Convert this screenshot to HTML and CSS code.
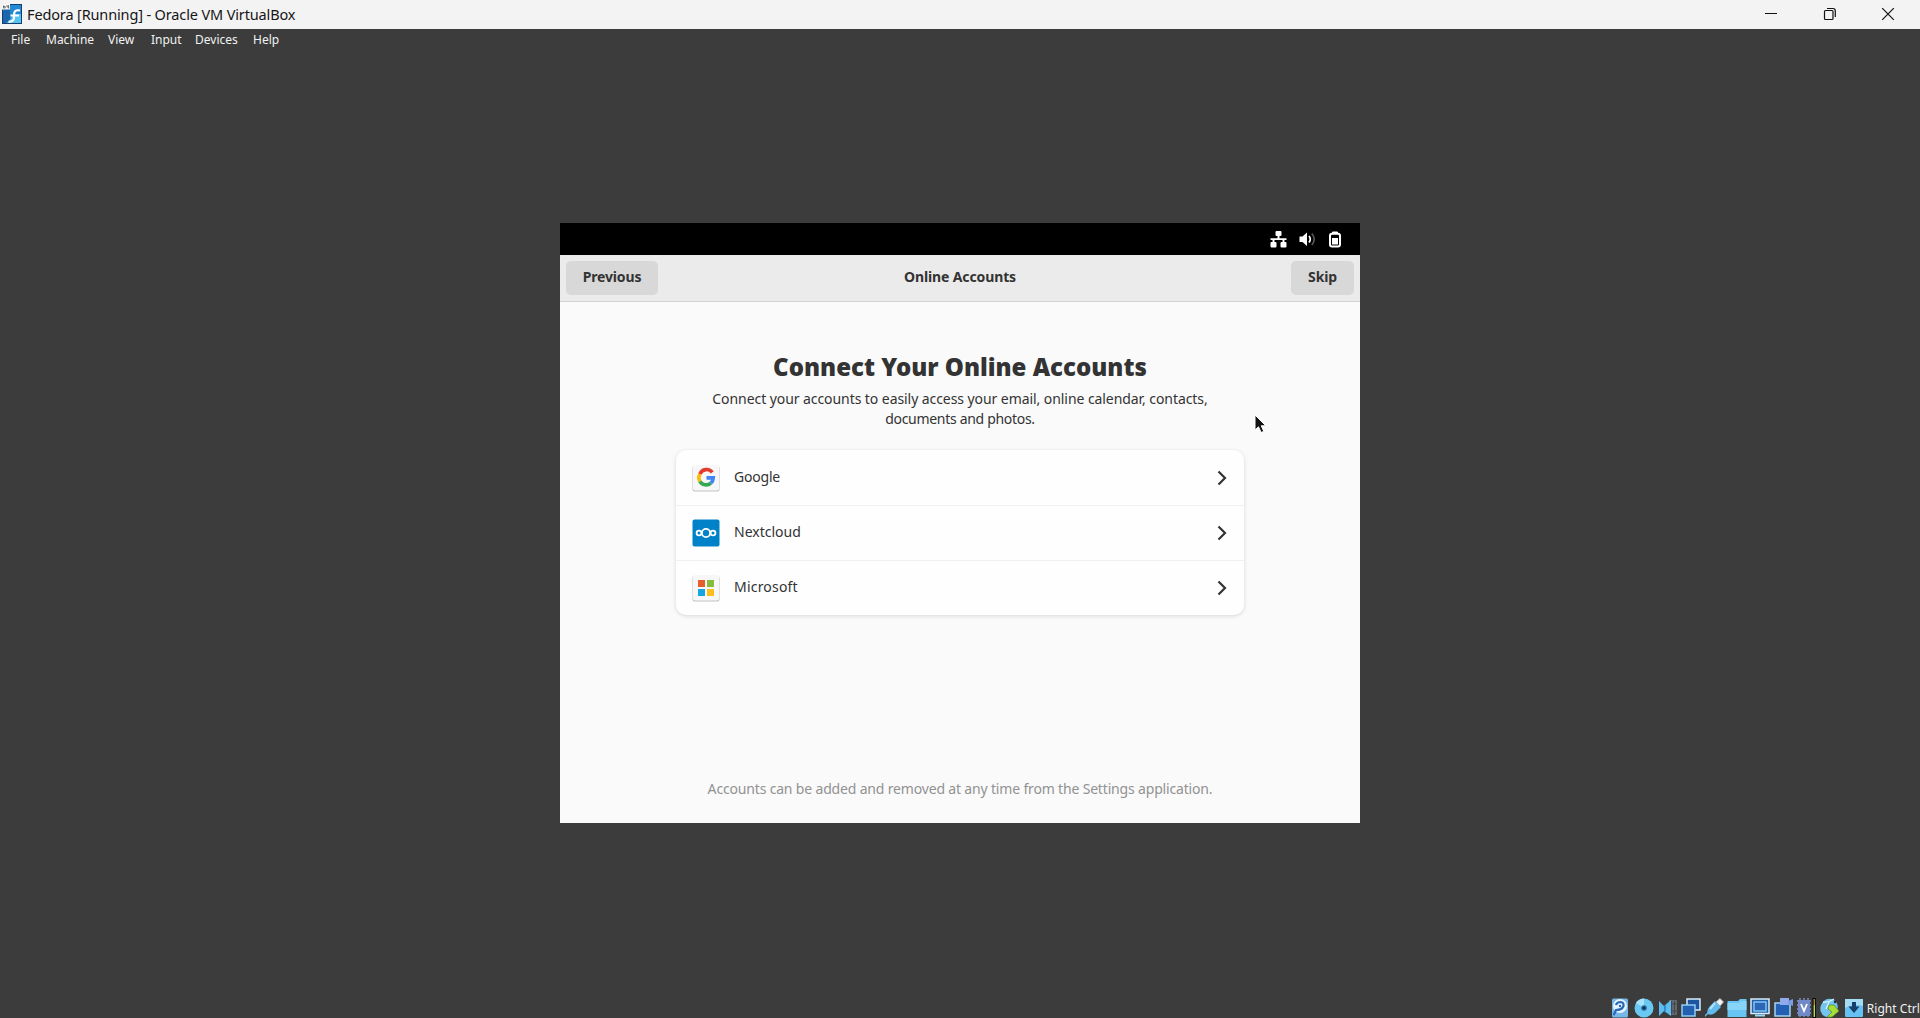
FILE: index.html
```html
<!DOCTYPE html>
<html lang="en">
<head>
<meta charset="utf-8">
<title>Fedora [Running] - Oracle VM VirtualBox</title>
<link rel="stylesheet" href="styles.css">
</head>
<body>
<header class="titlebar">
  <svg class="app-icon" width="20" height="20" viewBox="0 0 20 20">
    <rect x="0" y="0" width="20" height="20" fill="#15406d"/>
    <rect x="1" y="1" width="18" height="18" fill="#2489d4"/>
    <path d="M1 7L8 2V19H1z" fill="#1c67ac"/>
    <path d="M19 10V19H4Q9 17 11 10z" fill="#56c3f5"/>
    <path d="M18 6.5C13 5.5 12 8 12 11V14C12 17 9 18 6.5 17.5M8.5 11.5H17" fill="none" stroke="#fff" stroke-width="2.2"/>
    <rect x="0" y="0" width="8" height="5.5" fill="#f5f7f8"/>
    <path d="M1.5 1.5V4H3.2V2.5H1.5M5 1V3H7M6.6 1V4.5" fill="none" stroke="#555" stroke-width=".8"/>
  </svg>
  <h1 class="window-title">Fedora [Running] - Oracle VM VirtualBox</h1>
  <div class="window-controls">
    <svg width="14" height="14" viewBox="0 0 14 14"><path d="M1 6.500H13" stroke="#111" stroke-width="1"/></svg>
    <svg width="14" height="14" viewBox="0 0 14 14" fill="none" stroke="#111" stroke-width="1.200"><rect x="1.500" y="3.500" width="8.500" height="9" rx="1"/><path d="M4 1.500H10Q12.300 1.500 12.300 4V10"/></svg>
    <svg width="14" height="14" viewBox="0 0 14 14"><path d="M1.200 1.200L12.800 12.800M12.800 1.200L1.200 12.800" stroke="#111" stroke-width="1.200"/></svg>
  </div>
</header>
<nav class="menubar">
  <span class="m-file">File</span><span class="m-machine">Machine</span><span class="m-view">View</span><span class="m-input">Input</span><span class="m-devices">Devices</span><span class="m-help">Help</span>
</nav>
<main class="viewport">
  <section class="guest">
    <div class="topbar">
      <svg width="17" height="17" viewBox="0 0 17 17" fill="#fff"><rect x="5.500" y="0" width="6" height="5" rx="1"/><rect x="0.500" y="11" width="6" height="5.500" rx="1"/><rect x="10.500" y="11" width="6" height="5.500" rx="1"/><path d="M7.500 4h2v3.200h7v1.800h-2v3h-2v-3h-8v3h-2v-3h-2v-1.800h7z"/></svg>
      <svg width="17" height="17" viewBox="0 0 17 17"><path d="M0.500 5.500H3.500L8 1.500V15L3.500 11H0.500z" fill="#fff"/><path d="M10 5Q12.500 8.200 10 11.500" fill="none" stroke="#fff" stroke-width="1.700"/><path d="M12.800 2.500Q17.600 8.200 12.800 14" fill="none" stroke="#555" stroke-width="1.700"/></svg>
      <svg width="14" height="17" viewBox="0 0 14 17"><path d="M4.500 3V1H9.500V3" fill="#fff" stroke="#fff"/><rect x="2" y="2.800" width="10" height="12.700" rx="2" fill="none" stroke="#fff" stroke-width="2"/><rect x="4" y="7" width="6" height="6.500" fill="#fff"/></svg>
    </div>
    <div class="headerbar">
      <button class="btn btn-previous">Previous</button>
      <span class="page-name">Online Accounts</span>
      <button class="btn btn-skip">Skip</button>
    </div>
    <div class="page">
      <h2 class="heading">Connect Your Online Accounts</h2>
      <p class="lead"><span class="lead-first">Connect your accounts to easily access your email, online calendar, contacts,</span><br><span class="lead-second">documents and photos.</span></p>
      <ul class="accounts">
        <li class="account">
          <svg width="28" height="28" viewBox="0 0 28 28"><rect x=".5" y="2" width="27" height="25.500" rx="2" fill="#c2c2c2"/><rect x="1" y="1" width="26" height="25.500" rx="2" fill="#f7f7f7"/>
            <g fill="none" stroke-width="3.600"><path d="M20.300 8.400A7.200 7.200 0 0 0 7.900 10.100" stroke="#e33b2e"/><path d="M7.900 10.100A7.200 7.200 0 0 0 7.900 17.300" stroke="#fbbc05"/><path d="M7.900 17.300A7.200 7.200 0 0 0 18.800 19.100" stroke="#34a853"/><path d="M18.800 19.100A7.200 7.200 0 0 0 21.300 13.900H14.500" stroke="#4285f4"/></g></svg>
          <span class="name n-google">Google</span>
          <svg class="chevron" width="10" height="16" viewBox="0 0 10 16"><path d="M1.500 1.500L8 8L1.500 14.500"/></svg>
        </li>
        <li class="account">
          <svg width="28" height="28" viewBox="0 0 28 28"><rect x=".5" y=".5" width="27" height="27" rx="2" fill="#0082c9"/><g fill="none" stroke="#fff" stroke-width="1.800"><circle cx="14" cy="14" r="4.100"/><circle cx="7" cy="14" r="2.400"/><circle cx="21" cy="14" r="2.400"/></g></svg>
          <span class="name n-nextcloud">Nextcloud</span>
          <svg class="chevron" width="10" height="16" viewBox="0 0 10 16"><path d="M1.500 1.500L8 8L1.500 14.500"/></svg>
        </li>
        <li class="account">
          <svg width="28" height="28" viewBox="0 0 28 28"><rect x=".5" y="2" width="27" height="25.500" rx="2" fill="#c2c2c2"/><rect x="1" y="1" width="26" height="25.500" rx="2" fill="#f7f7f7"/><path d="M6 6h7v7H6z" fill="#e35f2b"/><path d="M15 6h7v7h-7z" fill="#86bc3b"/><path d="M6 15h7v7H6z" fill="#16a5e0"/><path d="M15 15h7v7h-7z" fill="#fdbf1b"/></svg>
          <span class="name n-microsoft">Microsoft</span>
          <svg class="chevron" width="10" height="16" viewBox="0 0 10 16"><path d="M1.500 1.500L8 8L1.500 14.500"/></svg>
        </li>
      </ul>
      <p class="note">Accounts can be added and removed at any time from the Settings application.</p>
    </div>
    <svg class="cursor" width="14" height="21" viewBox="0 0 14 21"><path d="M1 1V16L4.500 12.800L7.200 18.500L9.800 17.300L7.200 11.800H11.800z" fill="#111" stroke="#fff" stroke-width="1"/></svg>
  </section>
</main>
<footer class="statusbar">
  <svg width="20" height="20" viewBox="0 0 20 20"><rect x="2" y="0.500" width="16" height="19" rx="1.500" fill="#77b7e8"/><circle cx="10" cy="8" r="7" fill="#e4f3fd"/><path d="M6 7Q7 4 10.500 4Q14 4.500 13.500 8Q12 12 6 12Q5 15 3.500 17" stroke="#2868b5" stroke-width="2.200" fill="none"/><circle cx="10" cy="8" r="1.200" fill="#2868b5"/></svg>
  <svg class="disc" width="20" height="20" viewBox="0 0 20 20"><circle cx="10" cy="10" r="9.500" fill="#69c9f2"/><path d="M10 10L2 5A9.500 9.500 0 0 1 10 .5z" fill="#a7e2fa"/><circle cx="10" cy="10" r="2.800" fill="#24659f"/><circle cx="10" cy="10" r="1.300" fill="#172a3c"/></svg>
  <svg width="20" height="20" viewBox="0 0 20 20"><path d="M11 2h8v15h-8z" fill="#62686c"/><path d="M13.500 3v13M16.500 3v13M12 6h8M12 13h8" stroke="#43494c"/><path d="M1 3L6 8L13 2V18L6 13L1 18z" fill="#5ebcf0"/><path d="M7 7.500v6" stroke="#217fc0" stroke-width="1.500"/></svg>
  <svg width="20" height="20" viewBox="0 0 20 20"><rect x="6" y="1" width="13" height="11" fill="#1d55a2" stroke="#d8edf9" stroke-width="1.500"/><rect x="1" y="7" width="13" height="11" fill="#2460b0" stroke="#8fcdf4" stroke-width="1.500"/></svg>
  <svg width="20" height="20" viewBox="0 0 20 20"><path d="M12 4L16 .5L19.500 4L16 8z" fill="#f4f4f4" stroke="#aaa"/><path d="M11 3L17 9L11 15Q7 18 4 16L1 19L1 17L3 15Q3 11 6 8z" fill="#62bbec"/><path d="M11 5L6 11" stroke="#afe3fa" stroke-width="2"/></svg>
  <svg width="20" height="20" viewBox="0 0 20 20"><path d="M.5 3H11L13 1H19.500V19H.5z" fill="#67c4f3"/><path d="M.5 5H12L14 3H19.500V12H.5z" fill="#87d5f7"/></svg>
  <svg width="20" height="20" viewBox="0 0 20 20"><rect x="1" y="1" width="18" height="14.500" fill="#245fad" stroke="#d5ecf9" stroke-width="1.500"/><rect x="4" y="4" width="12" height="9" fill="#2c66b6" stroke="#8fd1fa" stroke-width="1.300"/><path d="M5 17.500h10" stroke="#9dd8fa" stroke-width="2"/></svg>
  <svg width="20" height="20" viewBox="0 0 20 20"><rect x="2" y="5" width="15" height="13" fill="#2360b4" stroke="#a4d4f3" stroke-width="1.500"/><rect x="7" y="0" width="9" height="7" fill="#91a9ed"/><path d="M15 3L20 1V8L15 6z" fill="#7d9ae5"/></svg>
  <svg width="20" height="20" viewBox="0 0 20 20"><path d="M1 3H15M1 7H15M1 11H15M1 15H15M4 0V19M8 0V19M12 0V19" stroke="#8298d3" stroke-width="1.300"/><rect x="2" y="2" width="12" height="16" fill="#7289c8"/><path d="M5 6L8 13L11 6" stroke="#fff" stroke-width="1.800" fill="none"/><rect x="16.500" y="0" width="4" height="20" fill="#080808"/><path d="M18.300 1V7" stroke="#a08a35" stroke-width="1.500"/><path d="M18.300 7V19" stroke="#b4d84e" stroke-width="1.500"/></svg>
  <svg width="22" height="20" viewBox="0 0 22 20"><ellipse cx="10" cy="10" rx="8.500" ry="9.500" fill="#73c5ee" transform="rotate(25 10 10)"/><path d="M4 4Q9 5 15 1M10 4L7 11" stroke="#d9f4ff" stroke-width="1.300" fill="none"/><circle cx="16" cy="4" r="1.200" fill="#172c40"/><path d="M10 7H15L20 13L13 19H8L13 14L9 11z" fill="#a5df34" stroke="#55832b" stroke-width=".7"/></svg>
  <svg width="20" height="20" viewBox="0 0 20 20"><rect x="1" y="1" width="18" height="18" rx="1" fill="#65c1f1"/><path d="M1 1H19V8Q9 5 1 10z" fill="#a4dcf6"/><path d="M8 4H12V8.500H15.500L10 15L4.500 8.500H8z" fill="#163d6c"/></svg>
  <span class="host-key">Right Ctrl</span>
</footer>
</body>
</html>
```
FILE: styles.css
```css
* { box-sizing: border-box; }
body {
  margin: 0;
  height: 1018px;
  display: flex;
  flex-direction: column;
  background: #3b3c3b;
  font-family: "Noto Sans", "Open Sans", sans-serif;
  overflow: hidden;
}
svg { display: block; flex: none; }
.titlebar {
  height: 29px;
  flex: none;
  display: flex;
  align-items: center;
  padding: 0 25px 1px 2px;
  background: #f3f3f3;
}
.window-title {
  margin: 0 0 0 5px;
  font-size: 14.5px;
  font-weight: 400;
  line-height: 20px;
  letter-spacing: -.14px;
  color: #161616;
  white-space: nowrap;
}
.window-controls { display: flex; gap: 44.5px; margin-left: auto; }
.menubar {
  height: 24px;
  flex: none;
  display: flex;
  padding: 2px 0 0 11px;
  color: #f2f2f2;
  font-size: 12px;
  line-height: 18px;
}
.menubar span { white-space: nowrap; }
.m-file { width: 35px; }
.m-machine { width: 62px; }
.m-view { width: 43px; }
.m-input { width: 44px; }
.m-devices { width: 58px; }
.viewport {
  flex: 1;
  display: flex;
  justify-content: center;
  padding-top: 170px;
}
.guest {
  position: relative;
  width: 800px;
  height: 600px;
  display: flex;
  flex-direction: column;
  background: #fafafa;
  color: #333;
}
.topbar {
  height: 32px;
  flex: none;
  display: flex;
  align-items: center;
  justify-content: flex-end;
  gap: 12px;
  padding-right: 18px;
  background: #000;
}
.headerbar {
  height: 47px;
  flex: none;
  display: grid;
  grid-template-columns: 92px 1fr 63px;
  align-items: center;
  padding: 0 6px 1px 6px;
  background: #ebebeb;
  border-bottom: 1px solid #d2d2d2;
}
.btn {
  height: 34px;
  padding: 0 0 2px;
  border: 0;
  border-radius: 5px;
  background: #d8d8d8;
  color: #333;
  font: 700 14px/32px "Noto Sans", sans-serif;
  letter-spacing: -.15px;
}
.page-name {
  margin-right: 29px;
  padding-bottom: 2px;
  text-align: center;
  font-size: 14px;
  font-weight: 700;
  letter-spacing: -.12px;
}
.page {
  flex: 1;
  display: flex;
  flex-direction: column;
  align-items: center;
  padding-top: 47px;
}
.heading {
  margin: 0;
  font-size: 24px;
  font-weight: 900;
  line-height: 36px;
  white-space: nowrap;
}
.lead {
  margin: 4px 0 0;
  font-size: 14px;
  line-height: 19.5px;
  text-align: center;
  white-space: nowrap;
}
.lead-first { letter-spacing: -.07px; }
.lead-second { letter-spacing: -.3px; }
.accounts {
  width: 568px;
  height: 165px;
  margin: 22px 0 0;
  padding: 0;
  list-style: none;
  border-radius: 10px;
  background: #fefefe;
  box-shadow: 0 1px 4px rgba(0, 0, 0, .14);
}
.account {
  height: 55px;
  display: flex;
  align-items: center;
  padding: 0 17px 0 16px;
}
.account + .account { border-top: 1px solid #f1f1f1; }
.name { margin-left: 14px; padding-bottom: 2px; font-size: 14px; line-height: 20px; }
.n-google { letter-spacing: -.2px; }
.n-microsoft { letter-spacing: .2px; }
.chevron { margin-left: auto; fill: none; stroke: #333; stroke-width: 2.2; }
.note {
  margin: auto 0 24px;
  font-size: 14px;
  line-height: 20px;
  letter-spacing: -.17px;
  color: #929292;
  white-space: nowrap;
}
.cursor { position: absolute; left: 694px; top: 191px; }
.statusbar {
  height: 21px;
  flex: none;
  display: flex;
  align-items: center;
  justify-content: flex-end;
  gap: 3px;
  color: #f0f0f0;
  font-size: 12px;
}
.disc { margin: 0 1px; }
.host-key { padding-top: 2px; line-height: 18px; white-space: nowrap; letter-spacing: .05px; }
```
